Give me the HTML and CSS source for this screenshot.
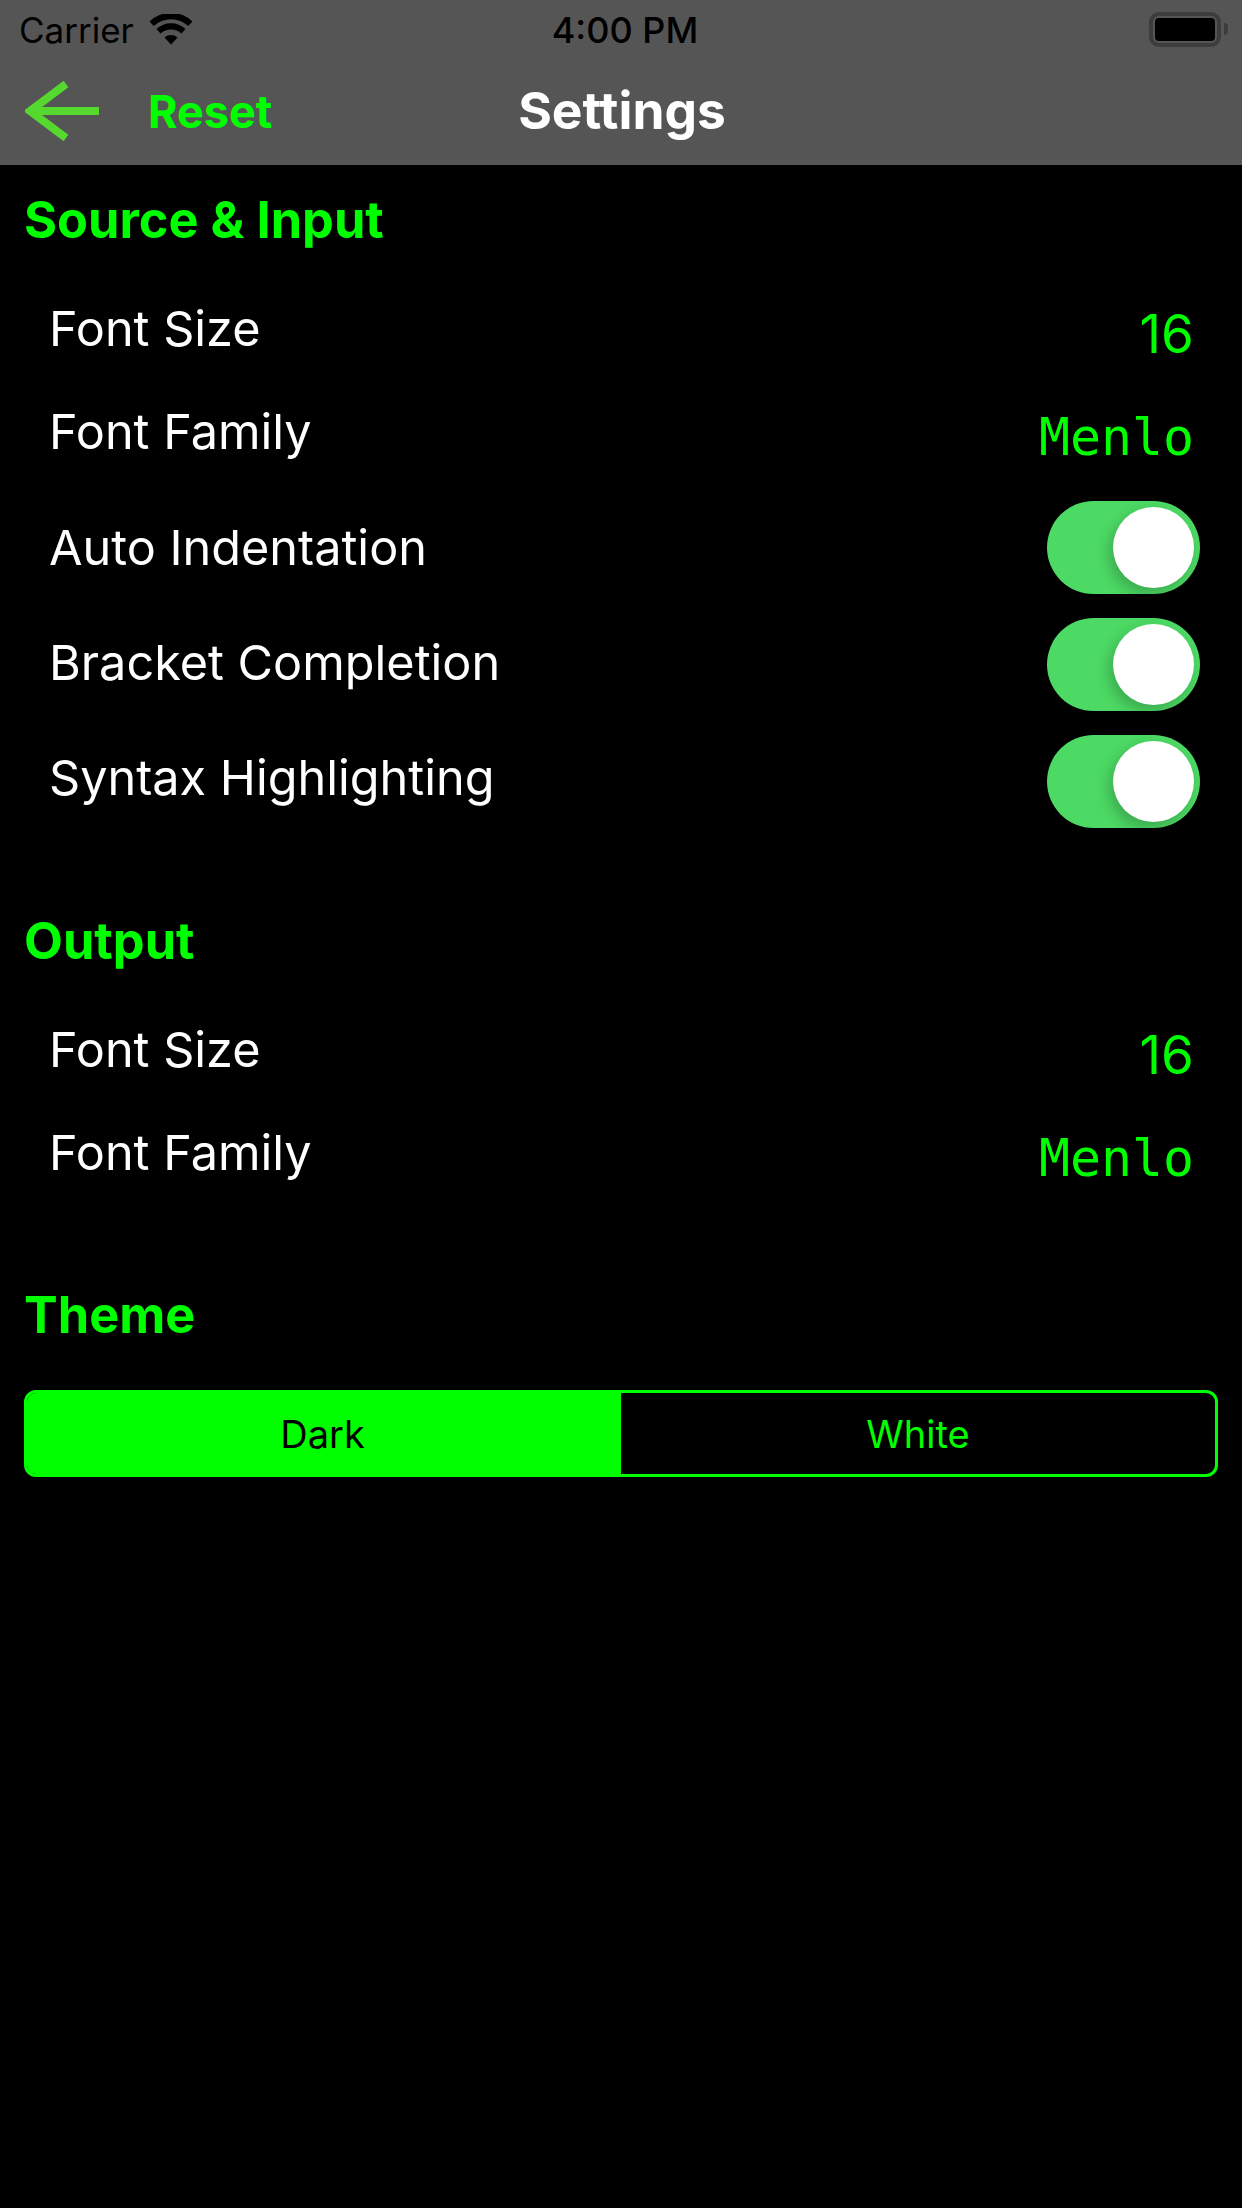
FILE: index.html
```html
<!DOCTYPE html>
<html lang="en">
<head>
<meta charset="utf-8">
<title>Settings</title>
<link rel="stylesheet" href="styles.css">
</head>
<body>
<header class="header">
  <div class="status">
    <div class="status-left">
      <span class="carrier">Carrier</span>
      <svg class="wifi" width="44" height="32" viewBox="0 0 44 32"><path d="M22 30.500 L15.500 23.500 A10 10 0 0 1 28.500 23.500Z M11.500 19.500 L7.500 15 A21.500 21.500 0 0 1 36.500 15 L32.500 19.500 A16 16 0 0 0 11.500 19.500Z M4.800 12 L0.500 7.500 A31 31 0 0 1 43.500 7.500 L39.200 12 A25 25 0 0 0 4.800 12Z" fill="#000"/></svg>
    </div>
    <span class="clock">4:00 PM</span>
    <div class="battery"><span class="battery-body"><span class="battery-fill"></span></span><span class="battery-cap"></span></div>
  </div>
  <nav class="nav">
    <svg class="back" width="76" height="60" viewBox="0 0 76 60"><path d="M74 30H5M41 3 5 30 41 57" fill="none" stroke="#55d92f" stroke-width="8"/></svg>
    <span class="reset">Reset</span>
    <span class="title">Settings</span>
  </nav>
</header>
<main class="content">
  <section class="section source">
    <h2 class="heading">Source &amp; Input</h2>
    <div class="row row-value"><span>Font Size</span><span class="num">16</span></div>
    <div class="row row-value"><span>Font Family</span><span class="mono">Menlo</span></div>
    <div class="toggles">
      <div class="row row-toggle"><span>Auto Indentation</span><span class="toggle"><span class="knob"></span></span></div>
      <div class="row row-toggle"><span>Bracket Completion</span><span class="toggle"><span class="knob"></span></span></div>
      <div class="row row-toggle"><span>Syntax Highlighting</span><span class="toggle"><span class="knob"></span></span></div>
    </div>
  </section>
  <section class="section output">
    <h2 class="heading">Output</h2>
    <div class="row row-value"><span>Font Size</span><span class="num">16</span></div>
    <div class="row row-value"><span>Font Family</span><span class="mono">Menlo</span></div>
  </section>
  <section class="section theme">
    <h2 class="heading">Theme</h2>
    <div class="segments"><span class="seg seg-on">Dark</span><span class="seg seg-off">White</span></div>
  </section>
</main>
</body>
</html>
```
FILE: styles.css
```css
* { box-sizing: border-box; }
html, body { margin: 0; background: #000; }
body { width: 1242px; height: 2208px; overflow: hidden; font-family: Inter, Roboto, "Liberation Sans", sans-serif; color: #fff; }
.header { height: 165px; background: #555; }
.status { height: 60px; padding: 0 14px 0 19px; display: flex; align-items: center; position: relative; justify-content: space-between; }
.status-left { display: flex; align-items: center; gap: 15px; }
.carrier { font-size: 35px; color: #000; }
.wifi { margin-top: -1px; }
.clock { position: absolute; left: 0; right: 0; text-align: center; font-size: 36px; color: #000; font-weight: 500; padding-left: 8px; }
.battery { display: flex; align-items: center; gap: 3px; }
.battery-body { width: 72px; height: 35px; border: 4px solid #3d3d3d; border-radius: 10px; padding: 2px; display: block; margin-top: -2px; }
.battery-fill { display: block; height: 100%; background: #000; border-radius: 4px; }
.battery-cap { width: 4px; height: 12px; background: #3d3d3d; border-radius: 0 6px 6px 0; margin-top: -2px; }
.nav { height: 105px; position: relative; display: flex; align-items: center; padding-left: 25px; }
.back { margin-top: -4px; }
.reset { margin-left: 47px; margin-top: -2px; font-size: 45px; font-weight: 700; color: #00ff00; }
.title { position: absolute; left: 2px; right: 0; text-align: center; font-size: 51.5px; font-weight: 700; margin-top: -5px; }
.content { padding: 0 24px; }
.heading { margin: 0 0 28px; font-size: 50.5px; font-weight: 700; color: #00ff00; line-height: 58px; }
.section.source { padding-top: 26px; }
.section.output { padding-top: 77px; }
.section.theme { padding-top: 82px; }
.toggles { padding-top: 7px; }
.row { display: flex; justify-content: space-between; align-items: center; padding-left: 25px; font-size: 48.6px; }
.row-value { height: 103px; }
.row-toggle { height: 115px; padding-right: 18px; }
.row-toggle:nth-child(2) .toggle { margin-top: 4px; }
.row-toggle:nth-child(3) .toggle { margin-top: 8px; }
.num { font-size: 53px; color: #00ff00; padding-right: 24px; padding-top: 10px; }
.mono { font-family: "DejaVu Sans Mono", monospace; font-size: 51.5px; color: #00ff00; padding-right: 24px; padding-top: 10px; }
.toggle { width: 153px; height: 93px; border-radius: 47px; background: #4cd964; display: flex; align-items: center; justify-content: flex-end; padding-right: 6px; }
.knob { width: 81px; height: 81px; border-radius: 50%; background: #fff; box-shadow: -4px 6px 14px rgba(0,0,0,.22); }
.segments { display: flex; height: 87px; margin-top: 46px; border: 3px solid #00ff00; border-radius: 12px; overflow: hidden; }
.seg { flex: 1 1 0; display: flex; align-items: center; justify-content: center; font-size: 38px; }
.seg-on { background: #00ff00; color: #000; flex: 0 0 591px; }
.seg-off { color: #00ff00; border-left: 3px solid #00ff00; }
```
